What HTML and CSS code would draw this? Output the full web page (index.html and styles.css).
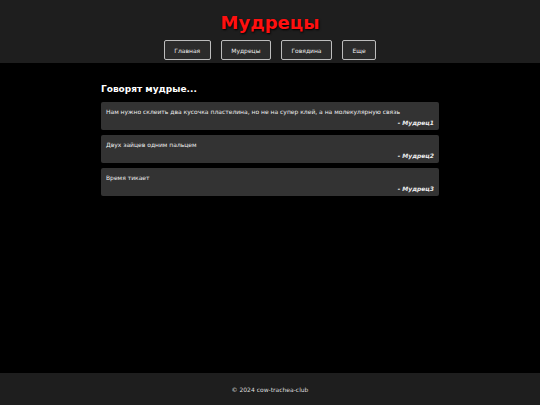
FILE: index.html
```html
<!DOCTYPE html>
<html lang="ru">
<head>
<meta charset="utf-8">
<title>Мудрецы</title>
<link rel="stylesheet" href="styles.css">
</head>
<body>
<header class="site-header">
  <h1 class="site-title">Мудрецы</h1>
  <nav class="nav">
    <a class="nav-btn" href="#">Главная</a>
    <a class="nav-btn" href="#">Мудрецы</a>
    <a class="nav-btn" href="#">Говядина</a>
    <a class="nav-btn" href="#">Еще</a>
  </nav>
</header>
<main class="main">
  <div class="container">
    <h2 class="section-title">Говорят мудрые...</h2>
    <div class="quotes">
      <div class="quote">
        <p class="quote-text">Нам нужно склеить два кусочка пластелина, но не на супер клей, а на молекулярную связь</p>
        <p class="quote-author">- Мудрец1</p>
      </div>
      <div class="quote">
        <p class="quote-text">Двух зайцев одним пальцем</p>
        <p class="quote-author">- Мудрец2</p>
      </div>
      <div class="quote">
        <p class="quote-text">Время тикает</p>
        <p class="quote-author">- Мудрец3</p>
      </div>
    </div>
  </div>
</main>
<footer class="site-footer">© 2024 cow-trachea-club</footer>
</body>
</html>
```

FILE: styles.css
```css
* { box-sizing: border-box; }
html, body { margin: 0; padding: 0; height: 100%; }
body {
  font-family: "Comic Sans MS", "DejaVu Sans", sans-serif;
  background: #000;
  color: #fff;
  display: flex;
  flex-direction: column;
  min-height: 100vh;
}
.site-header {
  background: #1e1e1e;
  height: 63px;
  padding-top: 10px;
  display: flex;
  flex-direction: column;
  align-items: center;
}
.site-title {
  margin: 0;
  color: #ff1010;
  font-size: 18px;
  line-height: 25px;
  font-weight: bold;
  text-shadow: 1px 1px 2px #000;
}
.nav {
  margin-top: 5px;
  display: flex;
  gap: 10px;
}
.nav-btn {
  display: flex;
  align-items: center;
  justify-content: center;
  height: 20px;
  padding: 0 9.5px;
  background: #2b2b2b;
  border: 1px solid #bdbdbd;
  border-radius: 2px;
  color: #eee;
  font-size: 6px;
  text-decoration: none;
}
.main {
  flex: 1;
  padding-top: 19px;
}
.container {
  width: 338px;
  margin: 0 auto;
}
.section-title {
  margin: 0 0 6px 0;
  font-size: 9px;
  line-height: 14px;
  font-weight: bold;
  color: #fff;
}
.quotes {
  display: flex;
  flex-direction: column;
  gap: 5px;
}
.quote {
  background: #333;
  border-radius: 2px;
  padding: 5px 5px 3px 5px;
  height: 28px;
}
.quote-text {
  margin: 0;
  font-size: 6px;
  line-height: 9px;
  color: #eee;
}
.quote-author {
  margin: 0;
  text-align: right;
  font-size: 6px;
  line-height: 13px;
  font-style: italic;
  font-weight: bold;
  color: #eee;
}
.site-footer {
  background: #1e1e1e;
  height: 32px;
  display: flex;
  align-items: center;
  justify-content: center;
  font-size: 6px;
  color: #ddd;
}
```
